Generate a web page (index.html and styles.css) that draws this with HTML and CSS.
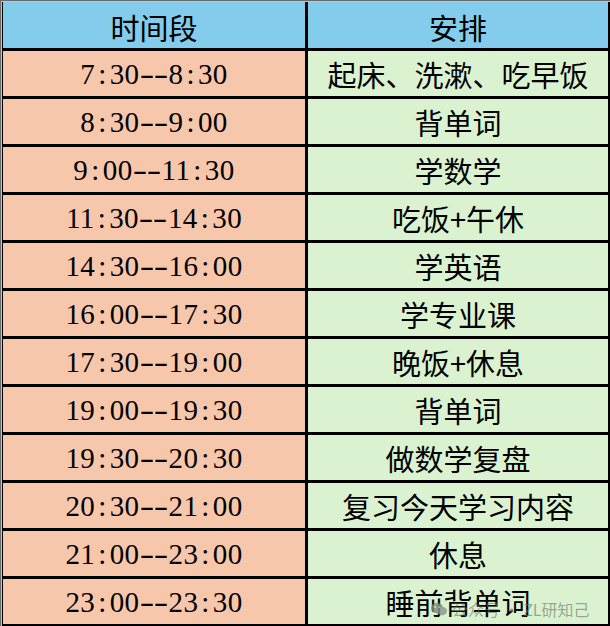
FILE: index.html
```html
<!DOCTYPE html>
<html lang="zh">
<head>
<meta charset="utf-8">
<link rel="stylesheet" href="styles.css">
</head>
<body>
<div class="frame">
  <div class="inner">
    <div class="grid">
      <div class="cell head">时间段</div>
      <div class="cell head">安排</div>

      <div class="cell time">7<span class="c">:</span>30<span class="d">-</span><span class="d">-</span>8<span class="c">:</span>30</div>
      <div class="cell task">起床、洗漱、吃早饭</div>

      <div class="cell time">8<span class="c">:</span>30<span class="d">-</span><span class="d">-</span>9<span class="c">:</span>00</div>
      <div class="cell task">背单词</div>

      <div class="cell time">9<span class="c">:</span>00<span class="d">-</span><span class="d">-</span>11<span class="c">:</span>30</div>
      <div class="cell task">学数学</div>

      <div class="cell time">11<span class="c">:</span>30<span class="d">-</span><span class="d">-</span>14<span class="c">:</span>30</div>
      <div class="cell task">吃饭+午休</div>

      <div class="cell time">14<span class="c">:</span>30<span class="d">-</span><span class="d">-</span>16<span class="c">:</span>00</div>
      <div class="cell task">学英语</div>

      <div class="cell time">16<span class="c">:</span>00<span class="d">-</span><span class="d">-</span>17<span class="c">:</span>30</div>
      <div class="cell task">学专业课</div>

      <div class="cell time">17<span class="c">:</span>30<span class="d">-</span><span class="d">-</span>19<span class="c">:</span>00</div>
      <div class="cell task">晚饭+休息</div>

      <div class="cell time">19<span class="c">:</span>00<span class="d">-</span><span class="d">-</span>19<span class="c">:</span>30</div>
      <div class="cell task">背单词</div>

      <div class="cell time">19<span class="c">:</span>30<span class="d">-</span><span class="d">-</span>20<span class="c">:</span>30</div>
      <div class="cell task">做数学复盘</div>

      <div class="cell time">20<span class="c">:</span>30<span class="d">-</span><span class="d">-</span>21<span class="c">:</span>00</div>
      <div class="cell task">复习今天学习内容</div>

      <div class="cell time">21<span class="c">:</span>00<span class="d">-</span><span class="d">-</span>23<span class="c">:</span>00</div>
      <div class="cell task">休息</div>

      <div class="cell time last">23<span class="c">:</span>00<span class="d">-</span><span class="d">-</span>23<span class="c">:</span>30</div>
      <div class="cell task last">睡前背单词</div>
    </div>
  </div>
  <div class="watermark">
    <svg class="wm-icon" width="16" height="14" viewBox="0 0 16 14">
      <ellipse cx="6" cy="6" rx="6" ry="5.2" fill="#7d8a7d"/>
      <ellipse cx="11" cy="9" rx="5" ry="4.3" fill="#8c968c"/>
      <circle cx="4" cy="5" r="0.9" fill="#d9f2d0"/>
      <circle cx="8" cy="5" r="0.9" fill="#d9f2d0"/>
    </svg>
    <span>公众号 · ZL研知己</span>
  </div>
</div>
</body>
</html>
```

FILE: styles.css
```css
html, body {
  margin: 0;
  padding: 0;
  background: #ffffff;
}

body {
  width: 610px;
  height: 626px;
  overflow: hidden;
}

.frame {
  position: relative;
  width: 609px;
  height: 625px;
  border-top: 1px solid #6a6a6a;
  border-left: 1px solid #6a6a6a;
}

.inner {
  border-top: 1px solid #c4c4c4;
  border-left: 1px solid #c4c4c4;
}

.grid {
  display: grid;
  grid-template-columns: 302px 300px;
  grid-template-rows: 46px repeat(11, 45px) 45px;
  column-gap: 3px;
  row-gap: 3px;
  padding: 0 2px 2px 1px;
  background: #000000;
}

.cell {
  display: flex;
  align-items: center;
  justify-content: center;
  color: #000;
  font-size: 29px;
  line-height: 1;
  padding-top: 2px;
  box-sizing: border-box;
  white-space: nowrap;
}

.head {
  background: #83cceb;
  font-family: "Noto Sans CJK SC", sans-serif;
  padding-top: 4px;
}

.time {
  background: #f7c7ac;
  font-family: "Liberation Serif", "Noto Sans CJK SC", serif;
  letter-spacing: 0.4px;
}

.task {
  background: #daf2d0;
  font-family: "Noto Sans CJK SC", sans-serif;
}

.c {
  display: inline-block;
  width: 14.5px;
  text-align: center;
}

.d {
  display: inline-block;
  width: 14.5px;
  text-align: center;
  transform: scaleX(1.5);
}

.watermark {
  position: absolute;
  left: 430px;
  top: 596px;
  display: flex;
  align-items: center;
  gap: 5px;
  font-family: "Noto Sans CJK SC", sans-serif;
  font-size: 16px;
  color: rgba(105, 115, 105, 0.6);
  white-space: nowrap;
}

.wm-icon {
  opacity: 0.8;
}
```
